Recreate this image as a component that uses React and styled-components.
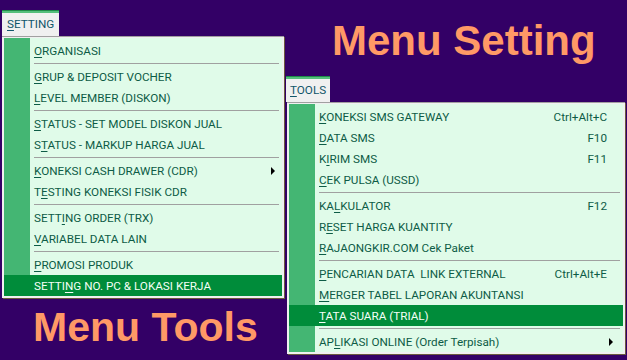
import React from 'react';
import styled, { createGlobalStyle } from 'styled-components';

const GlobalStyle = createGlobalStyle`
  html, body {
    margin: 0;
    padding: 0;
    background: #330066;
  }
  body {
    width: 627px;
    height: 360px;
    overflow: hidden;
    font-family: Roboto, 'Liberation Sans', sans-serif;
  }
`;

const settingItems = [
  { label: 'ORGANISASI', key: 0 },
  { sep: true },
  { label: 'GRUP & DEPOSIT VOCHER', key: 0 },
  { label: 'LEVEL MEMBER (DISKON)', key: 0 },
  { sep: true },
  { label: 'STATUS - SET MODEL DISKON JUAL', key: 0 },
  { label: 'STATUS - MARKUP HARGA JUAL', key: 1 },
  { sep: true },
  { label: 'KONEKSI CASH DRAWER (CDR)', key: 0, sub: true },
  { label: 'TESTING KONEKSI FISIK CDR', key: 1 },
  { sep: true },
  { label: 'SETTING ORDER (TRX)', key: 4 },
  { label: 'VARIABEL DATA LAIN', key: 0 },
  { sep: true },
  { label: 'PROMOSI PRODUK', key: 0 },
  { label: 'SETTING NO. PC & LOKASI KERJA', key: 5, active: true },
];

const toolItems = [
  { label: 'KONEKSI SMS GATEWAY', key: 0, shortcut: 'Ctrl+Alt+C' },
  { label: 'DATA SMS', key: 0, shortcut: 'F10' },
  { label: 'KIRIM SMS', key: 1, shortcut: 'F11' },
  { label: 'CEK PULSA (USSD)', key: 0 },
  { sep: true },
  { label: 'KALKULATOR', key: 2, shortcut: 'F12' },
  { label: 'RESET HARGA KUANTITY', key: 1 },
  { label: 'RAJAONGKIR.COM Cek Paket', key: 0 },
  { sep: true },
  { label: 'PENCARIAN DATA  LINK EXTERNAL', key: 0, shortcut: 'Ctrl+Alt+E' },
  { label: 'MERGER TABEL LAPORAN AKUNTANSI', key: 0 },
  { label: 'TATA SUARA (TRIAL)', key: 0, active: true },
  { sep: true },
  { label: 'APLIKASI ONLINE (Order Terpisah)', key: 2, sub: true },
];

const Page = styled.div`
  display: flex;
  align-items: flex-start;
  width: 627px;
  height: 360px;
`;

const Column = styled.div`
  display: flex;
  flex-direction: column;
  align-items: flex-start;
  margin-left: ${(p) => p.$left}px;
  padding-top: ${(p) => p.$top}px;
`;

const Title = styled.div`
  font-family: 'Liberation Sans', Arial, sans-serif;
  font-weight: bold;
  color: #ff9966;
  font-size: ${(p) => p.$size}px;
  line-height: ${(p) => p.$line}px;
  margin: ${(p) => p.$margin};
  white-space: pre;
`;

const Tab = styled.div`
  height: 26px;
  box-sizing: border-box;
  padding: 3px ${(p) => p.$pad}px 0 ${(p) => p.$pad}px;
  background: linear-gradient(#1f8a48 0 1px, #55bf7c 1px 3px, #f0f0f0 3px);
  color: #10566a;
  font-size: 11.7px;
  line-height: 23px;
  white-space: pre;
`;

const Panel = styled.div`
  width: ${(p) => p.$width}px;
  margin-left: ${(p) => p.$shift}px;
  box-sizing: border-box;
  background: #f0f0f0;
  border-top: 1px solid #a0a0a0;
  padding: 1px 2px 2px 2px;
  box-shadow: 1px 1px 0 #6b5a3e;
`;

const List = styled.div`
  display: flex;
  flex-direction: column;
  padding: 2px 0 0 0;
  background: linear-gradient(90deg, #44b673 26px, #e0fbe9 26px);
`;

const Row = styled.div`
  display: flex;
  align-items: center;
  height: 21px;
  padding: 0 ${(p) => p.$right}px 0 30px;
  background: ${(p) => (p.$active ? '#008c3a' : 'transparent')};
  color: ${(p) => (p.$active ? '#f4fff6' : '#0d5c46')};
  font-size: 11.7px;
  white-space: pre;
`;

const Label = styled.span`
  flex: 1;
`;

const Shortcut = styled.span`
  text-align: right;
`;

const Arrow = styled.span`
  width: 0;
  height: 0;
  border-top: 4px solid transparent;
  border-bottom: 4px solid transparent;
  border-left: 4px solid #000;
`;

const Sep = styled.div`
  height: 5px;
  display: flex;
  align-items: center;
  padding: 0 ${(p) => p.$right}px 0 30px;
  &::after {
    content: '';
    flex: 1;
    height: 1px;
    background: #a0a0a0;
  }
`;

const Key = styled.span`
  text-decoration: underline;
  text-underline-offset: 2px;
`;

const Mnemonic = ({ text, index }) => (
  <>
    {text.slice(0, index)}
    <Key>{text[index]}</Key>
    {text.slice(index + 1)}
  </>
);

const Menu = ({ title, items, width, shift, tabPad, rowRight, sepRight, arrowRight }) => (
  <>
    <Tab $pad={tabPad}>
      <Mnemonic text={title} index={0} />
    </Tab>
    <Panel $width={width} $shift={shift}>
      <List>
        {items.map((it, i) =>
          it.sep ? (
            <Sep key={i} $right={sepRight} />
          ) : (
            <Row key={i} $active={it.active} $right={it.sub ? arrowRight : rowRight}>
              <Label>
                <Mnemonic text={it.label} index={it.key} />
              </Label>
              {it.shortcut && <Shortcut>{it.shortcut}</Shortcut>}
              {it.sub && <Arrow />}
            </Row>
          )
        )}
      </List>
    </Panel>
  </>
);

export default function App() {
  return (
    <>
      <GlobalStyle />
      <Page>
        <Column $left={2} $top={10}>
          <Menu
            title="SETTING"
            items={settingItems}
            width={282}
            shift={0}
            tabPad={5}
            rowRight={16}
            sepRight={3}
            arrowRight={7}
          />
          <Title $size={41} $line={48} $margin="5px 0 0 31px">Menu Tools</Title>
        </Column>
        <Column $left={2} $top={0}>
          <Title $size={42} $line={50} $margin="16px 0 10px 46px">Menu Setting</Title>
          <Menu
            title="TOOLS"
            items={toolItems}
            width={338}
            shift={1}
            tabPad={4}
            rowRight={16}
            sepRight={3}
            arrowRight={10}
          />
        </Column>
      </Page>
    </>
  );
}
